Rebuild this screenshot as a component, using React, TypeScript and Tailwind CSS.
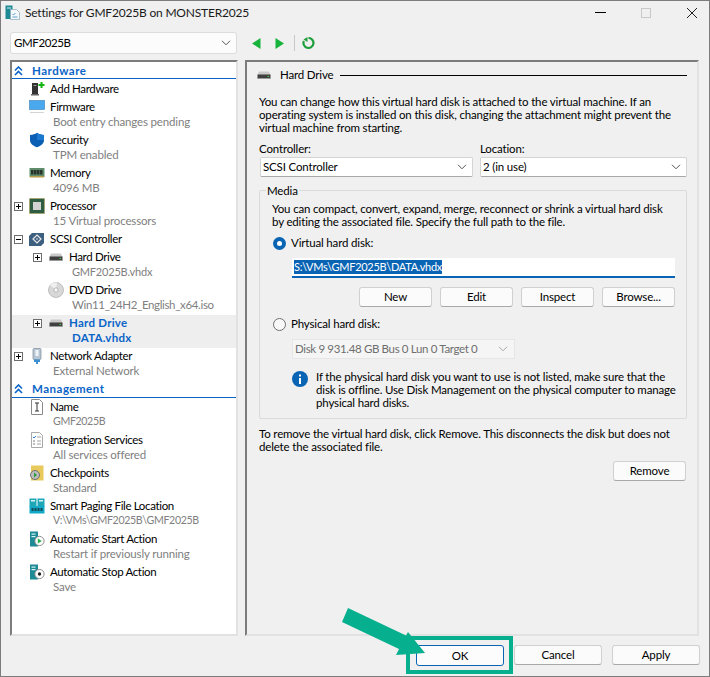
import { ReactNode } from 'react';

// tree icons, all drawn on a 16x16 box
function DriveIcon() {
  return (
    <svg width="16" height="16" viewBox="0 0 16 16">
      <path d="M3 4.5h10l1.5 3.5h-13z" fill="#c9c9c9" />
      <rect x="1.5" y="7.5" width="13" height="4" fill="#3f3f3f" />
      <rect x="1.5" y="11" width="13" height="1" fill="#9a9a9a" />
      <rect x="11.5" y="9" width="1.5" height="1" fill="#3fd24a" />
    </svg>
  );
}

function AddHardwareIcon() {
  return (
    <svg width="16" height="16" viewBox="0 0 16 16">
      <rect x="3" y="2" width="6" height="11" fill="#333" />
      <rect x="4.5" y="4" width="3" height="1" fill="#999" />
      <rect x="2" y="13" width="8" height="1.5" fill="#666" />
      <path d="M9.5 3h2V1h2v2h2v2h-2v2h-2V5h-2z" fill="#12b312" />
    </svg>
  );
}

function FirmwareIcon() {
  return (
    <svg width="16" height="16" viewBox="0 0 16 16">
      <rect x="0.5" y="1.5" width="15" height="9" fill="#49a8ee" stroke="#3a7fb8" strokeWidth="0.6" />
      <rect x="1" y="13" width="14" height="1" fill="#d4d4d4" />
    </svg>
  );
}

function ShieldIcon() {
  return (
    <svg width="16" height="16" viewBox="0 0 16 16">
      <path d="M8 .8c2 1.5 4 2 7 2.2v5c0 3.5-3 6-7 7.2C4 14 1 11.5 1 8V3c3-.2 5-.7 7-2.2z" fill="#0a5fb4" />
      <path d="M8 .8c2 1.5 4 2 7 2.2v5H8z" fill="#1b7ad0" />
    </svg>
  );
}

function MemoryIcon() {
  return (
    <svg width="16" height="16" viewBox="0 0 16 16">
      <rect x="0.5" y="3" width="15" height="9" fill="#5f8d6b" />
      <rect x="2" y="5" width="2.5" height="4.5" fill="#27332b" />
      <rect x="5" y="5" width="2.5" height="4.5" fill="#27332b" />
      <rect x="8" y="5" width="2.5" height="4.5" fill="#27332b" />
      <rect x="11" y="5" width="2.5" height="4.5" fill="#27332b" />
      <rect x="1" y="11" width="14" height="1.5" fill="#b59b48" />
    </svg>
  );
}

function ProcessorIcon() {
  return (
    <svg width="16" height="16" viewBox="0 0 16 16">
      <rect x="0.5" y="0.5" width="15" height="15" fill="#2f5d41" stroke="#b89a3c" strokeWidth="0.8" strokeDasharray="1 1" />
      <rect x="4" y="4" width="8" height="8" fill="#d2d2d2" />
    </svg>
  );
}

function ScsiIcon() {
  return (
    <svg width="16" height="16" viewBox="0 0 16 16">
      <path d="M3 1h12v10l-3 3H0V4z" fill="#3d5f80" />
      <path d="M8 3l4 4-4 4-4-4z" fill="none" stroke="#e8e8e8" strokeWidth="1.2" />
      <path d="M8 6l1 1-1 1-1-1z" fill="#e8e8e8" />
    </svg>
  );
}

function DvdIcon() {
  return (
    <svg width="16" height="16" viewBox="0 0 16 16">
      <circle cx="8" cy="8" r="7.5" fill="#d8d8d8" stroke="#aaa" strokeWidth="0.7" />
      <path d="M8 8L2 3a7.5 7.5 0 0 1 7-2.4z" fill="#efefef" />
      <circle cx="8" cy="8" r="2.2" fill="#f4f4f4" stroke="#999" strokeWidth="0.6" />
    </svg>
  );
}

function NetworkIcon() {
  return (
    <svg width="16" height="16" viewBox="0 0 16 16">
      <rect x="4" y="0.5" width="8" height="11" rx="1" fill="#b7c6d4" stroke="#7b8b99" strokeWidth="0.7" />
      <rect x="6.5" y="2" width="3" height="6" fill="#f1f4f6" />
      <rect x="5" y="11.5" width="6" height="2.5" fill="#3a8fd0" />
      <rect x="7" y="14" width="2" height="2" fill="#3a8fd0" />
    </svg>
  );
}

function NameIcon() {
  return (
    <svg width="16" height="16" viewBox="0 0 16 16">
      <path d="M2.5.5h8l3 3v12h-11z" fill="#fff" stroke="#8a8a8a" />
      <path d="M6 4h4M6 12h4M8 4v8" fill="none" stroke="#333" />
    </svg>
  );
}

function ServicesIcon() {
  return (
    <svg width="16" height="16" viewBox="0 0 16 16">
      <path d="M2.5.5h8l3 3v12h-11z" fill="#fff" stroke="#a9a9a9" />
      <path d="M4 5l1 1 2-2" fill="none" stroke="#2f7fd0" />
      <path d="M8 5h4M8 9h4M8 12h4" stroke="#a0a0a0" />
      <rect x="4" y="8" width="2" height="2" fill="#bcbcbc" />
      <rect x="4" y="11" width="2" height="2" fill="#bcbcbc" />
    </svg>
  );
}

function CheckpointIcon() {
  return (
    <svg width="16" height="16" viewBox="0 0 16 16">
      <rect x="2" y="0.5" width="12.5" height="15" fill="#e8c95c" />
      <circle cx="6" cy="10" r="4.5" fill="#bdbdbd" stroke="#6e6e6e" />
      <path d="M5 7.5l3 2.5-3 2.5z" fill="#2a9a3a" />
    </svg>
  );
}

function PagingIcon() {
  return (
    <svg width="16" height="16" viewBox="0 0 16 16">
      <rect x="0.5" y="0.5" width="7" height="8" fill="#1fa7b8" />
      <rect x="8.5" y="0.5" width="7" height="8" fill="#1fa7b8" />
      <rect x="2" y="2" width="4" height="1.5" fill="#d8f3f6" />
      <rect x="10" y="2" width="4" height="1.5" fill="#d8f3f6" />
      <rect x="0.5" y="8" width="15" height="7.5" fill="#11a9c7" />
      <rect x="2.5" y="10" width="2" height="3" fill="#174a55" />
      <rect x="5.5" y="10" width="2" height="3" fill="#174a55" />
      <rect x="8.5" y="10" width="2" height="3" fill="#174a55" />
      <rect x="11.5" y="10" width="2" height="3" fill="#174a55" />
    </svg>
  );
}

function ActionIcon({ stop }: { stop?: boolean }) {
  return (
    <svg width="16" height="16" viewBox="0 0 16 16">
      <rect x="1" y="0.5" width="8" height="15" fill="#1d8a96" />
      <rect x="2.5" y="2.5" width="4" height="1.2" fill="#d8f3f6" />
      <rect x="2.5" y="5" width="4" height="1.2" fill="#d8f3f6" />
      <circle cx="10.5" cy="10" r="4.6" fill="#fff" stroke="#8f8f8f" />
      {stop ? <circle cx="10.5" cy="10" r="1.7" fill="#222" /> : <path d="M8.8 7.5l4 2.5-4 2.5z" fill="#22b14c" />}
    </svg>
  );
}

function Expander({ open }: { open?: boolean }) {
  return (
    <div className="flex h-[9px] w-[9px] items-center justify-center border border-[#6d6d6d] bg-white">
      <svg width="7" height="7" viewBox="0 0 7 7">
        <path d={open ? 'M1 3.5h5' : 'M1 3.5h5M3.5 1v5'} stroke="#000" fill="none" />
      </svg>
    </div>
  );
}

function ChevronsUp() {
  return (
    <svg width="9" height="10" viewBox="0 0 9 10">
      <path d="M1 4.5l3.5-3.5 3.5 3.5M1 9l3.5-3.5L8 9" fill="none" stroke="#0a64c8" strokeWidth="1.6" />
    </svg>
  );
}

function Chevron({ color = '#555' }: { color?: string }) {
  return (
    <svg width="10" height="6" viewBox="0 0 10 6">
      <path d="M1 .8l4 4 4-4" fill="none" stroke={color} />
    </svg>
  );
}

function SectionHeader({ title, cls = '' }: { title: string; cls?: string }) {
  return (
    <div className={`mb-[1px] flex h-[17px] items-center border-b border-[#0a64c8] pl-[2px] font-bold tracking-[0.5px] text-[#0a64c8] ${cls}`}>
      <div className="flex w-[18px] justify-start">
        <ChevronsUp />
      </div>
      <span>{title}</span>
    </div>
  );
}

type RowProps = {
  icon: ReactNode;
  label: string;
  sub?: string;
  subCls?: string;
  nested?: boolean;
  expander?: 'open' | 'closed';
  selected?: boolean;
  lineCls?: string;
};

function TreeRow({ icon, label, sub, subCls = '', nested, expander, selected, lineCls = 'h-[17px] leading-[17px]' }: RowProps) {
  return (
    <div className={`flex ${sub ? 'h-[33px]' : ''} ${nested ? 'pl-[21px]' : 'pl-[2px]'} ${selected ? 'bg-[#eeeeee] font-bold text-[#0a64c8]' : ''}`}>
      <div className={`flex w-[15px] items-center ${lineCls}`}>
        {expander && <Expander open={expander === 'open'} />}
      </div>
      <div className={`flex w-[21px] items-center ${lineCls}`}>{icon}</div>
      <div className="-mt-px">
        <div className={`whitespace-nowrap ${selected ? 'tracking-[0.25px]' : 'tracking-[-0.35px]'} ${lineCls}`}>{label}</div>
        {sub && (
          <div className={`ml-[3px] h-[13px] whitespace-nowrap leading-[13px] ${selected ? 'tracking-[0.25px] text-[#0a64c8]' : 'text-[#808080]'} ${subCls}`}>{sub}</div>
        )}
      </div>
    </div>
  );
}

function Btn({ children, cls = 'w-[73px]' }: { children: ReactNode; cls?: string }) {
  return (
    <button className={`flex h-[20px] items-center justify-center rounded-[3px] border border-[#d0d0d0] border-b-[#a8a8a8] bg-[#fbfbfb] text-black ${cls}`}>
      {children}
    </button>
  );
}

function Radio({ on }: { on?: boolean }) {
  return on ? (
    <div className="flex h-[13px] w-[13px] items-center justify-center rounded-full bg-[#0a64b4]">
      <div className="h-[5px] w-[5px] rounded-full bg-white" />
    </div>
  ) : (
    <div className="h-[13px] w-[13px] rounded-full border border-[#6f6f6f] bg-[#f8f8f8]" />
  );
}

export default function App() {
  return (
    <div className="relative flex h-[677px] w-[710px] flex-col overflow-hidden border border-[#7c7c7c] bg-[#f0f0f0] font-['Lato',sans-serif] text-[11.5px] tracking-[-0.16px] text-black">
      {/* title bar */}
      <div className="flex h-[23px] shrink-0 items-center pl-[4px] pr-[11px]">
        <svg width="15" height="15" viewBox="0 0 15 15">
          <rect x="0.5" y="0.5" width="7" height="13.5" fill="#1d8a96" />
          <rect x="2" y="2.5" width="4" height="1" fill="#d8f3f6" />
          <path d="M5.5 4.5h6l3 3v7h-9z" fill="#f3f8fb" stroke="#8aa6b8" strokeWidth="0.7" />
          <path d="M7.5 9l1 1 2-2M7.5 12h5" fill="none" stroke="#3b8ac4" strokeWidth="0.8" />
        </svg>
        <span className="ml-[5px] text-[12px] tracking-[-0.2px] text-[#1a1a1a]">Settings for GMF2025B on MONSTER2025</span>
        <div className="ml-auto flex items-center">
          <div className="h-px w-[11px] bg-black" />
          <div className="ml-[35px] h-[10px] w-[10px] border border-[#c8c8c8]" />
          <svg className="ml-[35px]" width="12" height="12" viewBox="0 0 12 12">
            <path d="M1 1l10 10M11 1L1 11" stroke="#222" fill="none" />
          </svg>
        </div>
      </div>

      {/* combobox and toolbar */}
      <div className="mt-[8px] flex h-[22px] shrink-0 items-center pl-[9px]">
        <div className="flex h-[22px] w-[227px] items-center justify-between rounded-[3px] border border-[#dcdcdc] bg-[#fcfcfc] pl-[3px] pr-[5px] tracking-[-0.4px]">
          <span>GMF2025B</span>
          <Chevron />
        </div>
        <svg className="ml-[15px]" width="9" height="11" viewBox="0 0 9 11">
          <path d="M8.5 0v11L0 5.5z" fill="#17b33c" />
        </svg>
        <svg className="ml-[14px]" width="9" height="11" viewBox="0 0 9 11">
          <path d="M.5 0v11L9 5.5z" fill="#17b33c" />
        </svg>
        <div className="ml-[10px] h-[16px] w-px bg-[#c8c8c8]" />
        <svg className="ml-[7px]" width="13" height="13" viewBox="0 0 13 13">
          <path d="M6.5 1a5 5 0 1 1-4.6 3" fill="none" stroke="#1f9e3c" strokeWidth="2.2" />
          <path d="M5.5 0v5l-4-2.5z" fill="#1f9e3c" />
        </svg>
      </div>

      {/* panels */}
      <div className="mt-[6px] flex shrink-0 pl-[9px]">
        <div className="h-[576px] w-[228px] border-b-2 border-l-2 border-r-2 border-t-2 border-b-[#e2e2e2] border-l-[#7c7c7c] border-r-[#e2e2e2] border-t-[#7c7c7c] bg-white">
          <SectionHeader title="Hardware" cls="pt-px" />
          <TreeRow lineCls="h-[18.5px] leading-[20px]" icon={<AddHardwareIcon />} label="Add Hardware" />
          <TreeRow icon={<FirmwareIcon />} label="Firmware" sub="Boot entry changes pending" />
          <TreeRow icon={<ShieldIcon />} label="Security" sub="TPM enabled" />
          <TreeRow icon={<MemoryIcon />} label="Memory" sub="4096 MB" />
          <TreeRow expander="closed" icon={<ProcessorIcon />} label="Processor" sub="15 Virtual processors" />
          <TreeRow lineCls="h-[18px] leading-[18px]" expander="open" icon={<ScsiIcon />} label="SCSI Controller" />
          <TreeRow nested expander="closed" icon={<DriveIcon />} label="Hard Drive" sub="GMF2025B.vhdx" subCls="text-[11px] tracking-[-0.2px]" />
          <TreeRow nested icon={<DvdIcon />} label="DVD Drive" sub="Win11_24H2_English_x64.iso" subCls="tracking-[-0.35px]" />
          <TreeRow nested selected expander="closed" icon={<DriveIcon />} label="Hard Drive" sub="DATA.vhdx" />
          <TreeRow expander="closed" icon={<NetworkIcon />} label="Network Adapter" sub="External Network" />
          <SectionHeader title="Management" />
          <TreeRow icon={<NameIcon />} label="Name" sub="GMF2025B" subCls="text-[10.6px] tracking-[-0.35px]" />
          <TreeRow icon={<ServicesIcon />} label="Integration Services" sub="All services offered" />
          <TreeRow icon={<CheckpointIcon />} label="Checkpoints" sub="Standard" />
          <TreeRow icon={<PagingIcon />} label="Smart Paging File Location" sub="V:\VMs\GMF2025B\GMF2025B" subCls="text-[10.6px] tracking-[-0.35px]" />
          <TreeRow icon={<ActionIcon />} label="Automatic Start Action" sub="Restart if previously running" />
          <TreeRow icon={<ActionIcon stop />} label="Automatic Stop Action" sub="Save" />
        </div>

        <div className="ml-[7px] h-[576px] w-[454px] border-b-2 border-l-2 border-r-2 border-t-2 border-b-[#e2e2e2] border-l-[#7c7c7c] border-r-[#e2e2e2] border-t-[#7c7c7c] pl-[12px] pr-[10px]">
          <div className="flex h-[26px] items-center">
            <div className="-ml-[3px]">
              <DriveIcon />
            </div>
            <span className="ml-[8px]">Hard Drive</span>
            <div className="ml-[6px] h-px flex-1 bg-black" />
          </div>
          <p className="mt-[7px] leading-[13px]">
            You can change how this virtual hard disk is attached to the virtual machine. If an operating system is installed on this disk, changing the attachment might prevent the virtual machine from starting.
          </p>
          <div className="mt-[7px] flex gap-[7px]">
            <div className="ml-px w-[213px]">
              <div className="ml-[-1px] h-[16px] leading-[15px]">Controller:</div>
              <div className="flex h-[20px] items-center justify-between rounded-[2px] border border-[#d4d4d4] border-b-[#a8a8a8] bg-white pl-[2px] pr-[5px]">
                <span>SCSI Controller</span>
                <Chevron />
              </div>
            </div>
            <div className="w-[207px]">
              <div className="h-[16px] leading-[15px]">Location:</div>
              <div className="flex h-[20px] items-center justify-between rounded-[2px] border border-[#d4d4d4] border-b-[#a8a8a8] bg-white pl-[2px] pr-[5px]">
                <span>2 (in use)</span>
                <Chevron />
              </div>
            </div>
          </div>

          <fieldset className="mt-[7px] h-[235px] w-[428px] rounded-[2px] border border-[#dadada] pl-[13px] pr-[11px]">
            <legend className="-ml-[7px] px-[1px] leading-[13px]">Media</legend>
            <p className="-ml-px mt-[5px] leading-[13px]">
              You can compact, convert, expand, merge, reconnect or shrink a virtual hard disk by editing the associated file. Specify the full path to the file.
            </p>
            <div className="mt-[8px] flex h-[14px] items-center">
              <Radio on />
              <span className="ml-[5px]">Virtual hard disk:</span>
            </div>
            <div className="ml-[19px] mt-[8px] flex h-[20px] w-[383px] items-center border-b-2 border-[#0a64b4] bg-white pl-[2px]">
              <span className="bg-[#0a64b4] text-[11px] leading-[14px] tracking-[-0.3px] text-white">S:\VMs\GMF2025B\DATA.vhdx</span>
            </div>
            <div className="ml-[86px] mt-[9px] flex gap-[8px]">
              <Btn>New</Btn>
              <Btn>Edit</Btn>
              <Btn>Inspect</Btn>
              <Btn>Browse...</Btn>
            </div>
            <div className="mt-[10px] flex h-[14px] items-center">
              <Radio />
              <span className="ml-[5px]">Physical hard disk:</span>
            </div>
            <div className="ml-[19px] mt-[8px] flex h-[20px] w-[223px] items-center justify-between border border-[#e6e6e6] bg-[#f5f5f5] pl-[2px] pr-[6px] tracking-[-0.35px] text-[#6e6e6e]">
              <span>Disk 9 931.48 GB Bus 0 Lun 0 Target 0</span>
              <Chevron color="#a8a8a8" />
            </div>
            <div className="ml-[19px] mt-[11px] flex">
              <svg className="mt-[1px] shrink-0" width="16" height="16" viewBox="0 0 16 16">
                <circle cx="8" cy="8" r="8" fill="#0a64b4" />
                <rect x="7" y="7" width="2" height="6" fill="#fff" />
                <rect x="7" y="3.5" width="2" height="2" fill="#fff" />
              </svg>
              <p className="-mr-[5px] ml-[8px] leading-[13px]">
                If the physical hard disk you want to use is not listed, make sure that the disk is offline. Use Disk Management on the physical computer to manage physical hard disks.
              </p>
            </div>
          </fieldset>

          <p className="mt-[8px] leading-[13px]">
            To remove the virtual hard disk, click Remove. This disconnects the disk but does not delete the associated file.
          </p>
          <div className="mt-[8px] flex justify-end pr-[1px]">
            <Btn>Remove</Btn>
          </div>
        </div>
      </div>

      {/* bottom buttons */}
      <div className="mt-[9px] flex justify-end gap-[10px] pr-[9px]">
        <button className="flex h-[21px] w-[88px] items-center justify-center rounded-[3px] border border-[#0a64b4] bg-[#fcfcfc]">OK</button>
        <Btn cls="w-[88px]">Cancel</Btn>
        <Btn cls="w-[88px]">Apply</Btn>
      </div>

      {/* green annotation over the dialog */}
      <div className="absolute left-[405px] top-[635px] h-[38px] w-[107px] border-[4px] border-[#06b08e]" />
      <svg className="absolute left-[339px] top-[605px]" width="90" height="55" viewBox="339 605 90 55">
        <path d="M347 607L341 621 398 648 395 654 424 652 407 631 405 634.6z" fill="#06b08e" />
      </svg>
    </div>
  );
}
